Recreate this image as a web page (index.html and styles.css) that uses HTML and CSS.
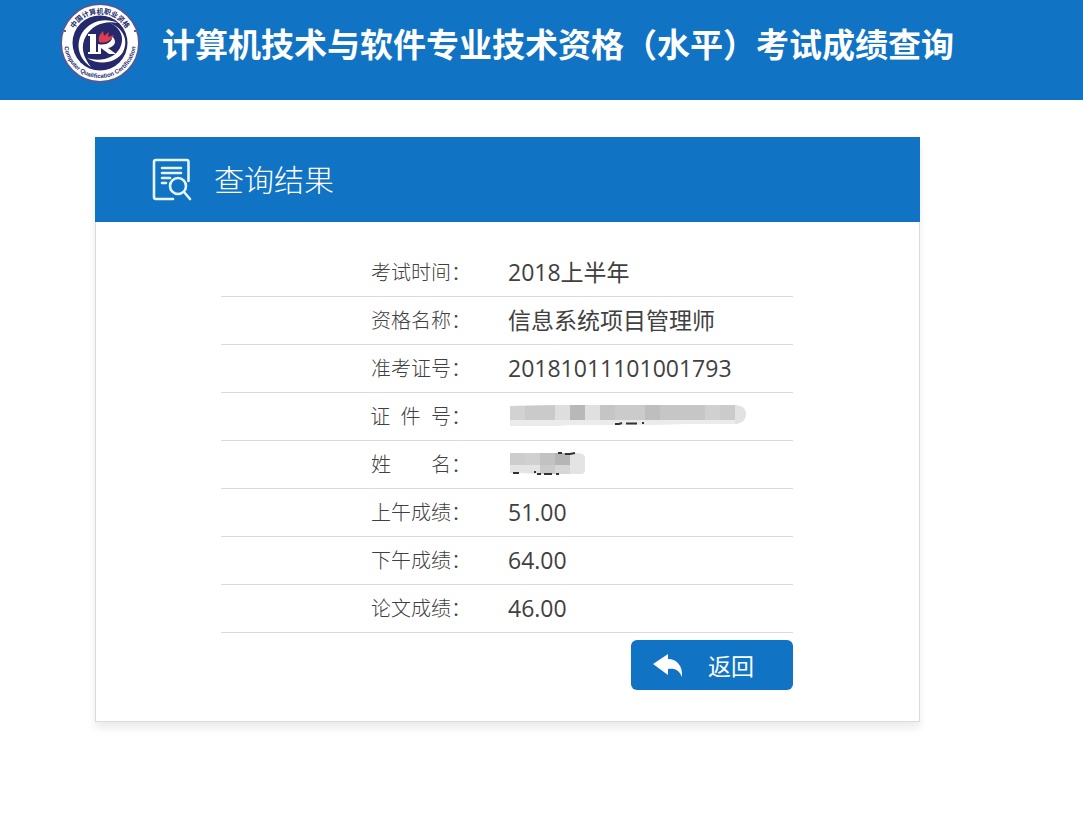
FILE: index.html
```html
<!DOCTYPE html>
<html lang="zh-CN">
<head>
    <meta charset="UTF-8">
    <meta name="viewport" content="width=device-width, initial-scale=1.0">
    <title>成绩查询</title>
    <link rel="stylesheet" href="styles.css">
</head>
<body>
    <header class="header">
        <svg class="logo" viewBox="0 0 80 80" aria-hidden="true">
            <defs>
                <path id="arcTop" d="M10.500 40 A29.500 29.500 0 0 1 69.500 40"/>
                <path id="arcBottom" d="M4.500 33 A36 36 0 1 0 75.500 33"/>
            </defs>
            <circle cx="40" cy="40" r="39" fill="#fff" stroke="#4b5c9d" stroke-width="2"/>
            <circle cx="40" cy="40" r="27.500" fill="#25296b"/>
            <path d="M58 20 C45 14 30 18 22 30 C15 42 19 56 31 64 C23 54 20 43 26 33 C32 22 45 17 58 20Z" fill="#fff"/>
            <path d="M50 20 C61 25 65 35 60 45 C54 56 40 59 27 55 C40 63 56 60 63 49 C69 37 63 25 50 20Z" fill="#fff"/>
            <path d="M28 31 H36 V49 H38 V51 H28 V49 H30 V33 H28Z" fill="#fff"/>
            <path d="M38 41 C46 43 53 39 52 33 C58 39 54 44 48 45 L56 51 H49 L41 45 V51 H38Z" fill="#fff"/>
            <path d="M39 39 C38 34 40 31 43 28 L44 33 L49 29 L48 34 L54 32 C51 38 45 41 39 39Z" fill="#e23b4e"/>
            <circle cx="5" cy="28" r="1" fill="#25296b"/>
            <circle cx="75" cy="28" r="1" fill="#25296b"/>
            <text class="logo-cn"><textPath href="#arcTop" startOffset="50%" text-anchor="middle">中国计算机职业资格</textPath></text>
            <text class="logo-en"><textPath href="#arcBottom" startOffset="50%" text-anchor="middle">Computer Qualification Certification</textPath></text>
        </svg>
        <h1>计算机技术与软件专业技术资格（水平）考试成绩查询</h1>
    </header>

    <main class="container">
        <section class="card">
            <div class="card-header">
                <svg class="card-icon" viewBox="0 0 38 43" stroke-width="2.6" aria-hidden="true">
                    <path d="M35.500 23 V4 Q35.500 2 33.500 2 H3 Q1 2 1 4 V39 Q1 41 3 41 H20"/>
                    <path d="M9 10 H28 M9 15 H28 M9 20 H17 M9 25 H13"/>
                    <circle cx="25" cy="28" r="8"/>
                    <path d="M31 34 L37 41"/>
                </svg>
                <h2>查询结果</h2>
            </div>
            <div class="card-body">
                <table class="result">
                    <tr>
                        <th scope="row">考试时间：</th>
                        <td>2018上半年</td>
                    </tr>
                    <tr>
                        <th scope="row">资格名称：</th>
                        <td>信息系统项目管理师</td>
                    </tr>
                    <tr>
                        <th scope="row">准考证号：</th>
                        <td>20181011101001793</td>
                    </tr>
                    <tr>
                        <th scope="row">证&nbsp;&nbsp;件&nbsp;&nbsp;号：</th>
                        <td>
                            <svg class="mask" width="238" height="24" viewBox="0 0 238 24" role="img" aria-label="已隐藏">
                                <clipPath id="idClip"><path d="M2 2 L50 1 H228 Q238 2 238 10 Q238 18 228 20 H180 L150 21 H60 L50 22 H2Z"/></clipPath>
                                <g clip-path="url(#idClip)">
                                    <rect width="238" height="24" fill="#ebebeb"/>
                                    <rect x="2" width="15" height="16" fill="#d2d2d2"/>
                                    <rect x="17" width="30" height="16" fill="#cacaca"/>
                                    <rect x="47" width="15" height="16" fill="#dedede"/>
                                    <rect x="62" width="15" height="16" fill="#b8b8b8"/>
                                    <rect x="77" width="15" height="16" fill="#e0e0e0"/>
                                    <rect x="92" width="15" height="16" fill="#c5c5c5"/>
                                    <rect x="107" width="30" height="16" fill="#cbcbcb"/>
                                    <rect x="137" width="15" height="16" fill="#bebebe"/>
                                    <rect x="152" width="45" height="16" fill="#c6c6c6"/>
                                    <rect x="197" width="15" height="16" fill="#d0d0d0"/>
                                    <rect x="212" width="15" height="16" fill="#cbcbcb"/>
                                    <rect x="227" width="11" height="24" fill="#e2e2e2"/>
                                </g>
                                <path d="M107 20 H111 L114 19 M118 19.500 H129 M134 19 H136" class="ink"/>
                            </svg>
                        </td>
                    </tr>
                    <tr>
                        <th scope="row">姓　　名：</th>
                        <td>
                            <svg class="mask" width="238" height="24" viewBox="0 0 238 24" role="img" aria-label="已隐藏">
                                <clipPath id="nameClip"><path d="M2 1 H71 Q77 2 77 6 V18 Q77 22 73 22 H30 L12 21 H2Z"/></clipPath>
                                <g clip-path="url(#nameClip)">
                                    <rect width="77" height="24" fill="#e4e4e4"/>
                                    <rect x="2" width="15" height="13" fill="#cdcdcd"/>
                                    <rect x="17" width="15" height="13" fill="#d0d0d0"/>
                                    <rect x="32" width="15" height="13" fill="#c2c2c2"/>
                                    <rect x="47" width="15" height="13" fill="#b5b5b5"/>
                                    <rect x="32" y="13" width="15" height="11" fill="#cacaca"/>
                                    <rect x="47" y="13" width="15" height="11" fill="#d6d6d6"/>
                                </g>
                                <path d="M50 1 H54 M57 2 H62 L67 1 M5 21 H11 M26 20 H28 M29 22 H33 M36 22 H44 M48 22 H51" class="ink"/>
                            </svg>
                        </td>
                    </tr>
                    <tr>
                        <th scope="row">上午成绩：</th>
                        <td>51.00</td>
                    </tr>
                    <tr>
                        <th scope="row">下午成绩：</th>
                        <td>64.00</td>
                    </tr>
                    <tr>
                        <th scope="row">论文成绩：</th>
                        <td>46.00</td>
                    </tr>
                </table>
                <div class="actions">
                    <button type="button" class="back-btn" onclick="history.back()">
                        <svg class="back-icon" viewBox="0 0 30 24" aria-hidden="true">
                            <path d="M0 11 L15 1 V6 C24 6 30 13 29 24 C26 17 22 15 15 16 V22Z"/>
                        </svg>
                        返回
                    </button>
                </div>
            </div>
        </section>
    </main>
</body>
</html>
```

FILE: styles.css
```css
:root {
    --primary: #1073c3;
    --line: #dadada;
    --text: #404040;
}

body {
    margin: 0;
    background: white;
    color: var(--text);
    font-family: "Open Sans", "Noto Sans CJK SC", sans-serif;
}

.header {
    display: flex;
    align-items: center;
    gap: 22px;
    height: 86px;
    padding: 0 60px 14px;
    background: var(--primary);
    color: white;
}

.logo {
    flex: none;
    width: 80px;
    height: 80px;
}

.logo-cn {
    font-size: 7px;
    font-weight: 700;
    fill: #25296b;
}

.logo-en {
    font-family: "Liberation Sans", sans-serif;
    font-size: 6px;
    font-weight: 700;
    fill: #25296b;
}

h1 {
    margin: 0;
    padding-top: 3px;
    font-size: 33px;
    line-height: 48px;
    font-weight: 700;
    white-space: nowrap;
}

.container {
    padding: 37px 163px 37px 95px;
}

.card {
    border: 1px solid var(--line);
    border-top: none;
    box-shadow: 0 6px 8px rgba(0, 0, 0, 0.08);
}

.card-header {
    display: flex;
    align-items: center;
    gap: 23px;
    height: 85px;
    margin: 0 -1px;
    padding: 0 58px;
    background: var(--primary);
    color: white;
}

.card-icon {
    width: 38px;
    height: 43px;
    overflow: visible;
    fill: none;
    stroke: #e6f5ff;
    stroke-linecap: round;
}

h2 {
    margin: 0;
    font-size: 30px;
    line-height: 44px;
    font-weight: 300;
}

.card-body {
    padding: 26px 126px 31px 125px;
}

.result {
    width: 100%;
    border-collapse: collapse;
    table-layout: fixed;
}

.result tr {
    height: 48px;
    border-bottom: 1px solid var(--line);
}

.result th,
.result td {
    padding: 0;
    line-height: 32px;
}

.result th {
    width: 250px;
    padding-top: 2px;
    font-size: 20px;
    font-weight: 300;
    text-align: right;
}

.result td {
    padding-left: 37px;
    font-size: 23px;
}

.mask {
    display: block;
}

.ink {
    fill: none;
    stroke: #333;
    stroke-width: 2;
}

.actions {
    display: flex;
    justify-content: flex-end;
    padding-top: 7px;
}

.back-btn {
    display: flex;
    align-items: center;
    gap: 25px;
    width: 162px;
    height: 50px;
    padding: 0 22px;
    border: none;
    border-radius: 6px;
    background: var(--primary);
    color: white;
    font-family: inherit;
    font-size: 23px;
    cursor: pointer;
}

.back-icon {
    width: 30px;
    height: 24px;
    fill: white;
}

@media (max-width: 900px) {
    .container {
        padding: 24px;
    }

    .card-body {
        padding: 24px;
    }

    .result th {
        width: 40%;
    }

    h1 {
        font-size: 23px;
        line-height: 32px;
        white-space: normal;
    }
}
```
